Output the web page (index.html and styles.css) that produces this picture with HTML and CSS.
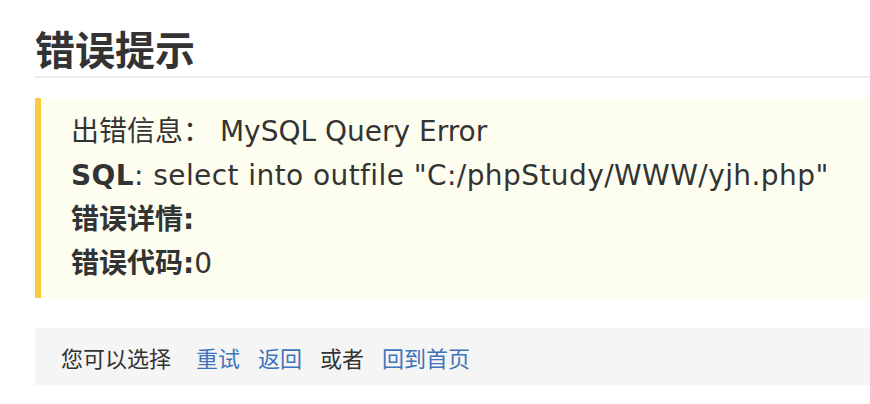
FILE: index.html
```html
<!DOCTYPE html>
<html lang="zh-CN">
<head>
<meta charset="utf-8">
<title>错误提示</title>
<link rel="stylesheet" href="styles.css">
</head>
<body>
<div class="page">
  <h1 class="title">错误提示</h1>
  <div class="errbox">
    <p class="row">出错信息： MySQL Query Error</p>
    <p class="row wide"><b>SQL</b>: select into outfile "C:/phpStudy/WWW/yjh.php"</p>
    <p class="row"><b>错误详情:</b></p>
    <p class="row"><b>错误代码:</b>0</p>
  </div>
  <div class="actions">
    <span class="lead">您可以选择</span>
    <a class="link" href="#">重试</a>
    <a class="link" href="#">返回</a>
    <span>或者</span>
    <a class="link" href="#">回到首页</a>
  </div>
</div>
</body>
</html>
```
FILE: styles.css
```css
html, body {
  margin: 0;
  padding: 0;
  background: #ffffff;
}
body {
  font-family: "DejaVu Sans", "Noto Sans CJK SC", sans-serif;
  color: #333333;
  overflow: hidden;
}
.page {
  padding: 20px 0 0 35px;
  width: 835px;
}
.title {
  margin: 0;
  font-family: "Noto Sans CJK SC", sans-serif;
  font-size: 40px;
  font-weight: 700;
  line-height: 56px;
  color: #333333;
  border-bottom: 2px solid #ececec;
}
.errbox {
  margin-top: 20px;
  background: #fefef0;
  border-left: 6px solid #f8ca40;
  padding: 12px 0 12px 30px;
}
.row {
  margin: 0;
  font-size: 28px;
  line-height: 44px;
}
.row.wide {
  letter-spacing: 0.42px;
}
.row b {
  font-weight: 700;
}
.actions {
  margin-top: 30px;
  height: 57px;
  background: #f5f5f5;
  display: flex;
  align-items: center;
  gap: 18px;
  padding-left: 26px;
  font-family: "Noto Sans CJK SC", sans-serif;
  font-size: 22px;
  color: #333333;
}
.lead {
  margin-right: 7px;
}
.link {
  color: #3d74ba;
  text-decoration: none;
}
```
